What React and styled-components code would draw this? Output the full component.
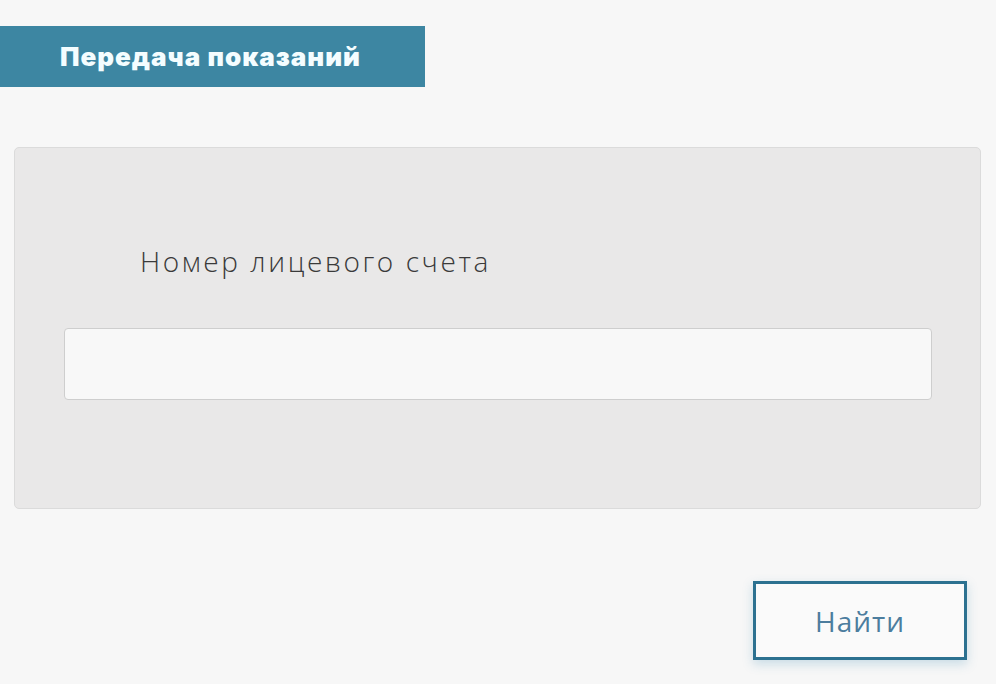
import React from 'react';
import styled, { createGlobalStyle } from 'styled-components';

const GlobalStyle = createGlobalStyle`
  html, body {
    margin: 0;
    padding: 0;
    background: #f7f7f7;
  }
  * {
    box-sizing: border-box;
  }
`;

const Page = styled.div`
  width: 996px;
  height: 684px;
  padding: 26px 15px 0 14px;
  background: #f7f7f7;
  display: flex;
  flex-direction: column;
`;

const TitleBar = styled.div`
  width: 425px;
  height: 61px;
  margin-left: -14px;
  padding-left: 60px;
  display: flex;
  align-items: center;
  background-color: #3d86a2;
`;

const Title = styled.h1`
  margin: 0;
  font-family: Inter, 'Noto Sans', sans-serif;
  font-weight: 900;
  font-size: 26px;
  letter-spacing: 1px;
  color: #f4fdff;
`;

const Panel = styled.div`
  margin-top: 60px;
  height: 362px;
  padding: 95px 49px 0 49px;
  background-color: #e9e8e8;
  border: 1px solid #dbdbdb;
  border-radius: 5px;
  display: flex;
  flex-direction: column;
`;

const Label = styled.label`
  margin-left: 76px;
  font-family: 'Open Sans', sans-serif;
  font-weight: 300;
  font-size: 28px;
  line-height: 36px;
  letter-spacing: 2.6px;
  color: #3a3a3a;
`;

const Field = styled.input`
  margin-top: 49px;
  width: 868px;
  height: 72px;
  background-color: #f8f8f8;
  border: 1px solid #cecece;
  border-radius: 4px;
  outline: none;
  font-size: 20px;
`;

const Actions = styled.div`
  display: flex;
  justify-content: flex-end;
  padding-top: 72px;
`;

const SearchButton = styled.button`
  width: 214px;
  height: 79px;
  margin-right: 14px;
  background-color: #fafafa;
  border: 3px solid #2c7190;
  box-shadow: 0 4px 10px rgba(60, 140, 180, 0.25);
  font-family: 'Open Sans', sans-serif;
  font-size: 28px;
  letter-spacing: 1px;
  color: #4c7d9e;
  cursor: pointer;
`;

const App = () => (
  <>
    <GlobalStyle />
    <Page>
      <TitleBar>
        <Title>Передача показаний</Title>
      </TitleBar>
      <Panel>
        <Label htmlFor="account">Номер лицевого счета</Label>
        <Field id="account" type="text" />
      </Panel>
      <Actions>
        <SearchButton type="submit">Найти</SearchButton>
      </Actions>
    </Page>
  </>
);

export default App;
